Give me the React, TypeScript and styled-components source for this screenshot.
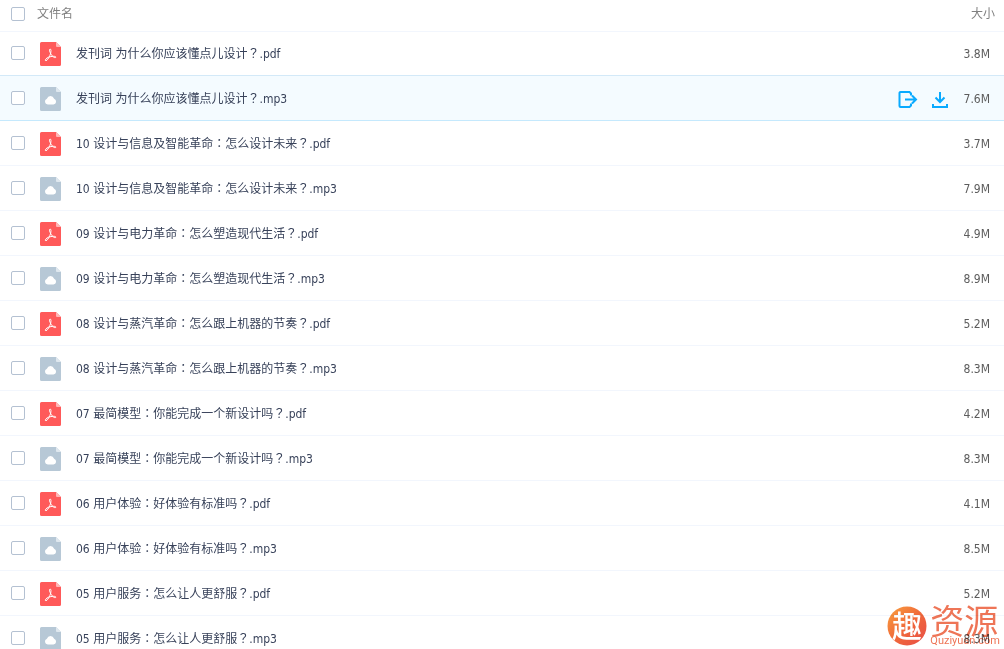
import React from "react";
import styled, { createGlobalStyle, css } from "styled-components";

const Global = createGlobalStyle`
  * { box-sizing: border-box; }
  body {
    margin: 0;
    background: #fff;
    font: 12px/20px "DejaVu Sans Condensed", "Noto Sans CJK SC", sans-serif;
    color: #38425a;
    overflow: hidden;
  }
`;

const Page = styled.main`
  position: relative;
  height: 100vh;
  overflow: hidden;
  background: #fff;
`;

const Table = styled.table`
  display: block;
  width: 100%;
`;

const Head = styled.thead`
  display: block;
  margin-bottom: -1px;
`;

const Body = styled.tbody`
  display: block;
`;

const HeadRow = styled.tr`
  display: flex;
  align-items: center;
  height: 32px;
  padding: 0 9px 4px 11px;
  border-bottom: 1px solid #f2f6fd;
  color: #808080;
`;

const HeadCell = styled.th<{ $grow?: boolean }>`
  display: flex;
  padding: 0;
  font-weight: 400;
  ${(p) => p.$grow && css`flex: 1; padding-left: 12px;`}
`;

const Row = styled.tr<{ $active: boolean }>`
  display: flex;
  align-items: center;
  height: 45px;
  padding: 0 14px 0 11px;
  border-bottom: 1px solid #f2f6fd;
  ${(p) =>
    p.$active &&
    css`
      background: #f4fbff;
      border-bottom-color: #c5e9fd;
      box-shadow: 0 -1px 0 #d3e9f8;
    `}
`;

const Cell = styled.td`
  display: flex;
  align-items: center;
  padding: 0;
`;

const NameCell = styled(Cell)`
  flex: 1;
  gap: 15px;
  padding-left: 15px;
`;

const ActionCell = styled(Cell)`
  gap: 15px;
  padding: 4px 12px 0 0;
`;

const SizeCell = styled(Cell)`
  justify-content: flex-end;
  width: 28px;
  padding-top: 2px;
  color: #5c5c5c;
`;

const Check = styled.input`
  appearance: none;
  width: 14px;
  height: 14px;
  margin: 0;
  border: 1px solid #b4c1d2;
  border-radius: 2px;
  background: #fff;
`;

const Centered = styled.span`
  font-family: "Noto Sans CJK TC", sans-serif;
`;

const FileIcon = styled.svg`
  display: block;
  width: 21px;
  height: 24px;
  margin-top: 2px;
`;

const IconButton = styled.button`
  display: block;
  width: 18px;
  height: 18px;
  padding: 0;
  border: 0;
  background: none;
  color: #09aaff;
  svg { display: block; overflow: visible; }
`;

const Watermark = styled.div`
  position: absolute;
  right: 4px;
  bottom: 2px;
  display: flex;
  gap: 3px;
  mix-blend-mode: multiply;
  pointer-events: none;
  color: #ee7557;
`;

const Brand = styled.div`
  display: flex;
  flex-direction: column;
`;

const BrandName = styled.span`
  font: 34px/30px "Noto Sans CJK SC", sans-serif;
`;

const BrandUrl = styled.span`
  font: 11px/12px Roboto, sans-serif;
`;

const Emblem = styled.svg`
  display: block;
  width: 40px;
  height: 40px;
  margin-top: 1px;
  text {
    font: 500 30px "Noto Sans CJK SC", sans-serif;
    fill: #fff;
  }
`;

const titles = [
  "发刊词 为什么你应该懂点儿设计？",
  "10 设计与信息及智能革命：怎么设计未来？",
  "09 设计与电力革命：怎么塑造现代生活？",
  "08 设计与蒸汽革命：怎么跟上机器的节奏？",
  "07 最简模型：你能完成一个新设计吗？",
  "06 用户体验：好体验有标准吗？",
  "05 用户服务：怎么让人更舒服？",
];
const sizes = ["3.8M", "7.6M", "3.7M", "7.9M", "4.9M", "8.9M", "5.2M", "8.3M", "4.2M", "8.3M", "4.1M", "8.5M", "5.2M", "8.3M"];
const files = sizes.map((size, i) => ({
  name: titles[Math.floor(i / 2)] + (i % 2 ? ".mp3" : ".pdf"),
  pdf: i % 2 === 0,
  size,
}));

const FileName = ({ text }: { text: string }) => (
  <span>
    {text.split(/([：？])/).map((part, i) => (i % 2 ? <Centered key={i}>{part}</Centered> : part))}
  </span>
);

const TypeIcon = ({ pdf }: { pdf: boolean }) => (
  <FileIcon viewBox="0 0 21 24" aria-hidden="true">
    <path d="M1.5 0H16L21 5V22.5a1.5 1.5 0 0 1-1.5 1.5H1.5a1.5 1.5 0 0 1-1.5-1.5V1.5a1.5 1.5 0 0 1 1.5-1.5Z" fill={pdf ? "#ff5959" : "#b7c8d6"} />
    <path d="M16 0L21 5H17a1 1 0 0 1-1-1Z" fill={pdf ? "#ffb5b5" : "#dfe8ef"} />
    {pdf ? (
      <path
        d="M10 7C11.500 7 10.900 9.600 10.700 11.200C9.800 14.200 8 17.900 6 18.800C4.400 18.600 5.800 16.200 8.600 15.200C11.500 14.200 15.800 13.800 15.800 15.200C15.400 16.600 12.300 14.800 10.800 12C9.900 10 8.800 7.300 10 7Z"
        fill="none"
        stroke="#fff"
        strokeWidth="1"
      />
    ) : (
      <path d="M7.8 17.5A3 3 0 0 1 6.900 11.700A3.800 3.800 0 0 1 14.100 11.700A3 3 0 0 1 13.400 17.5Z" fill="#fff" />
    )}
  </FileIcon>
);

const ShareIcon = () => (
  <svg width="18" height="18" viewBox="0 0 18 18" fill="none" stroke="currentColor" strokeWidth="2">
    <path d="M12 4.500V2.500L10.500 1H1.500a1 1 0 0 0-1 1V15a1 1 0 0 0 1 1H10.500L12 14.500V12.500M6 8.500h11M13 4.500l4 4-4 4" />
  </svg>
);

const DownloadIcon = () => (
  <svg width="18" height="18" viewBox="0 0 18 18" fill="none" stroke="currentColor" strokeWidth="2">
    <path d="M8 1v10M3.500 6.500L8 11l4.500-4.500M1 13v3h14v-3" />
  </svg>
);

export default function App() {
  return (
    <Page>
      <Global />
      <Table>
        <Head>
          <HeadRow>
            <HeadCell><Check type="checkbox" aria-label="全选" /></HeadCell>
            <HeadCell $grow>文件名</HeadCell>
            <HeadCell>大小</HeadCell>
          </HeadRow>
        </Head>
        <Body>
          {files.map((file, i) => (
            <Row key={file.name} $active={i === 1}>
              <Cell><Check type="checkbox" aria-label={file.name} /></Cell>
              <NameCell>
                <TypeIcon pdf={file.pdf} />
                <FileName text={file.name} />
              </NameCell>
              {i === 1 && (
                <ActionCell>
                  <IconButton aria-label="分享"><ShareIcon /></IconButton>
                  <IconButton aria-label="下载"><DownloadIcon /></IconButton>
                </ActionCell>
              )}
              <SizeCell>{file.size}</SizeCell>
            </Row>
          ))}
        </Body>
      </Table>
      <Watermark>
        <Emblem viewBox="0 0 40 40">
          <defs>
            <linearGradient id="emblem" x1="0" y1="0" x2="1" y2="1">
              <stop offset="0" stopColor="#f9a13f" />
              <stop offset="0.5" stopColor="#f0693a" />
              <stop offset="1" stopColor="#e84d48" />
            </linearGradient>
          </defs>
          <circle cx="20" cy="20" r="19.5" fill="url(#emblem)" />
          <text x="20" y="31" textAnchor="middle">趣</text>
        </Emblem>
        <Brand>
          <BrandName>资源</BrandName>
          <BrandUrl>Quziyuan.com</BrandUrl>
        </Brand>
      </Watermark>
    </Page>
  );
}
